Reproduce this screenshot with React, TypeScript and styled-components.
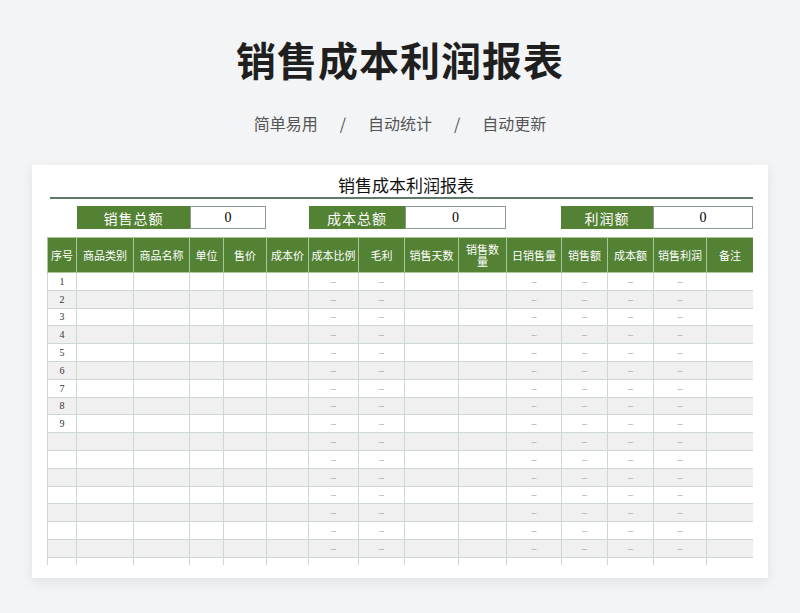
import React from "react";
import styled, { createGlobalStyle } from "styled-components";

const G = createGlobalStyle`
  body{margin:0;background:#f3f4f6;font-family:"Noto Sans CJK SC","Noto Sans",sans-serif;}
`;
const Page = styled.div`width:800px;height:613px;display:flex;flex-direction:column;align-items:center;overflow:hidden;`;
const H1 = styled.h1`margin:33px 0 0;font-size:40px;line-height:52px;font-weight:700;color:#1f1f1f;letter-spacing:1px;`;
const Sub = styled.div`margin-top:27px;font-size:16px;line-height:22px;color:#555;display:flex;gap:22px;`;
const Card = styled.div`margin-top:31px;width:736px;height:413px;background:#fff;box-shadow:0 4px 12px rgba(0,0,0,0.08);box-sizing:border-box;padding:9px 15px 0 15px;`;
const CTitle = styled.div`text-align:center;font-size:17px;line-height:22px;color:#111;margin-left:12px;`;
const Rule = styled.div`height:2px;background:#5f7a66;margin:1px 0 0 3px;width:703px;`;
const Summ = styled.div`display:flex;margin:7px 0 0 30px;height:23px;`;
const Label = styled.div<{w:number}>`width:${p=>p.w}px;background:#548235;color:#fff;font-size:14px;display:flex;align-items:center;justify-content:center;letter-spacing:1px;`;
const Val = styled.div<{w:number;mr:number}>`width:${p=>p.w}px;margin-right:${p=>p.mr}px;border:1px solid #8a9a90;box-sizing:border-box;display:flex;align-items:center;justify-content:center;font-size:14px;font-family:"Liberation Serif",serif;`;
const Wrap = styled.div`margin-top:8px;height:328px;overflow:hidden;`;
const Table = styled.table`border-collapse:collapse;table-layout:fixed;width:706px;font-size:11px;`;
const Th = styled.th`background:#548235;color:#fff;font-weight:400;height:34px;border:1px solid #a9c79a;padding:0;line-height:12px;`;
const Td = styled.td<{alt:boolean}>`background:${p=>p.alt?"#f0f0f0":"#fff"};height:16.8px;border:1px solid #cdd8d2;text-align:center;padding:0;font-family:"Liberation Serif",serif;font-size:10px;color:#333;`;
const Dash = styled.span`color:#999;`;

const cols=[29,57,56,34,43,42,50,46,54,48,55,46,46,53,47];
const heads=["序号","商品类别","商品名称","单位","售价","成本价","成本比例","毛利","销售天数","销售数\n量","日销售量","销售额","成本额","销售利润","备注"];
const dash=new Set([6,7,10,11,12,13]);

export default function App(){
  return <Page><G/>
    <H1>销售成本利润报表</H1>
    <Sub><span>简单易用</span><span>/</span><span>自动统计</span><span>/</span><span>自动更新</span></Sub>
    <Card>
      <CTitle>销售成本利润报表</CTitle>
      <Rule/>
      <Summ>
        <Label w={113}>销售总额</Label><Val w={76} mr={43}>0</Val>
        <Label w={96}>成本总额</Label><Val w={101} mr={55}>0</Val>
        <Label w={92}>利润额</Label><Val w={100} mr={0}>0</Val>
      </Summ>
      <Wrap>
        <Table>
          <colgroup>{cols.map((w,i)=><col key={i} style={{width:w}}/>)}</colgroup>
          <thead><tr>{heads.map((h,i)=><Th key={i}>{h.split("\n").map((s,j)=><div key={j}>{s}</div>)}</Th>)}</tr></thead>
          <tbody>{Array.from({length:17}).map((_,r)=><tr key={r}>{cols.map((_,c)=><Td key={c} alt={r%2===1}>{c===0&&r<9?r+1:dash.has(c)?<Dash>–</Dash>:""}</Td>)}</tr>)}</tbody>
        </Table>
      </Wrap>
    </Card>
  </Page>;
}
